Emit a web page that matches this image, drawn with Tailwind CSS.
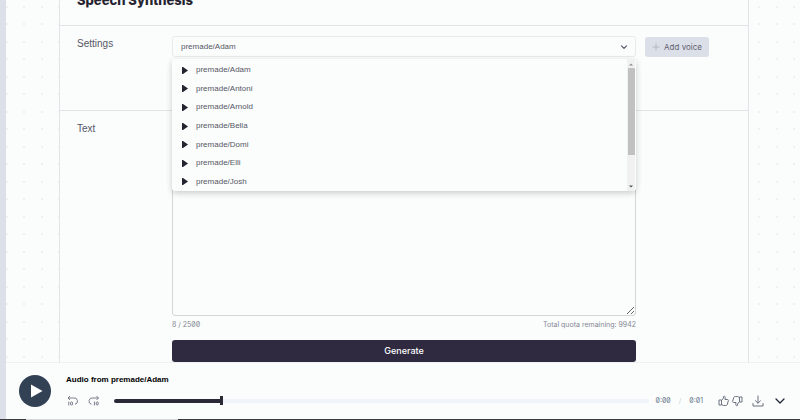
<!DOCTYPE html>
<html lang="en">
<head>
    <meta charset="UTF-8">
    <meta name="viewport" content="width=device-width, initial-scale=1.0">
    <title>Speech Synthesis</title>

    <!-- Tailwind CSS -->
    <script src="https://cdn.jsdelivr.net/npm/@tailwindcss/browser@4"></script>
</head>

<body class="h-screen overflow-hidden flex flex-col bg-[#fbfcfc] text-[#555865] font-['Liberation_Sans',sans-serif]">

    <div class="flex flex-1 min-h-0">
        <div class="w-[6px] shrink-0 bg-[#dbe0e9]"></div>

        <div class="flex flex-col flex-1 min-w-0">

            <!-- Page content on the dotted background -->
            <main class="flex-1 min-h-0 overflow-hidden pl-[53px] pr-[51px] bg-[radial-gradient(circle_at_18px_7px,#eef0f1_1px,transparent_1px),radial-gradient(circle_at_18px_24px,#eef0f1_1px,transparent_1px),radial-gradient(circle_at_1px_7px,#eef0f1_1px,transparent_1px),radial-gradient(circle_at_1px_24px,#eef0f1_1px,transparent_1px)] bg-[size:35px_35px]">
                <div class="h-full border-x border-[#e2e4e8] bg-[#fbfcfc]">

                    <header class="h-[26px] px-[17px] pb-[15px] flex items-end border-b border-[#e2e4e8]">
                        <h1 class="font-['Inter',sans-serif] text-[13px] leading-5 font-extrabold text-[#25232f]">Speech Synthesis</h1>
                    </header>

                    <!-- Settings -->
                    <section class="h-[85px] pl-[17px] pr-[39px] pt-[10px] flex items-start border-b border-[#e2e4e8]">
                        <label for="voice" class="w-[95px] text-[10px] leading-4">Settings</label>

                        <div class="relative z-10 flex-1">
                            <select id="voice" class="block w-full h-[21px] px-2 appearance-none rounded-[3px] border border-[#e9eaed] bg-[#fbfcfc] text-[8px]">
                                <option selected>premade/Adam</option>
                                <option>premade/Antoni</option>
                                <option>premade/Arnold</option>
                                <option>premade/Bella</option>
                                <option>premade/Domi</option>
                                <option>premade/Elli</option>
                                <option>premade/Josh</option>
                            </select>
                            <svg class="absolute right-2 top-[7px] w-2 h-2 pointer-events-none" viewBox="0 0 8 8" fill="none" stroke="#555865" stroke-width="1.2" stroke-linecap="round" stroke-linejoin="round"><path d="M1.5 2.8 4 5.3l2.5-2.5"/></svg>

                            <!-- Open voice list -->
                            <div class="absolute inset-x-0 top-full mt-[2px] h-[132px] flex rounded-[3px] bg-[#fbfcfc] shadow-[0_2px_6px_rgba(0,0,0,0.2)]">
                                <ul class="flex-1 flex flex-col pt-[2px] pl-[10px] text-[8px] leading-3">
                                    <li class="flex-1 flex items-center gap-2"><svg class="w-[6px] h-[7px]" viewBox="0 0 6 7" fill="#25232f"><path d="M0 0h1l5 3.5-5 3.5H0z"/></svg>premade/Adam</li>
                                    <li class="flex-1 flex items-center gap-2"><svg class="w-[6px] h-[7px]" viewBox="0 0 6 7" fill="#25232f"><path d="M0 0h1l5 3.5-5 3.5H0z"/></svg>premade/Antoni</li>
                                    <li class="flex-1 flex items-center gap-2"><svg class="w-[6px] h-[7px]" viewBox="0 0 6 7" fill="#25232f"><path d="M0 0h1l5 3.5-5 3.5H0z"/></svg>premade/Arnold</li>
                                    <li class="flex-1 flex items-center gap-2"><svg class="w-[6px] h-[7px]" viewBox="0 0 6 7" fill="#25232f"><path d="M0 0h1l5 3.5-5 3.5H0z"/></svg>premade/Bella</li>
                                    <li class="flex-1 flex items-center gap-2"><svg class="w-[6px] h-[7px]" viewBox="0 0 6 7" fill="#25232f"><path d="M0 0h1l5 3.5-5 3.5H0z"/></svg>premade/Domi</li>
                                    <li class="flex-1 flex items-center gap-2"><svg class="w-[6px] h-[7px]" viewBox="0 0 6 7" fill="#25232f"><path d="M0 0h1l5 3.5-5 3.5H0z"/></svg>premade/Elli</li>
                                    <li class="flex-1 flex items-center gap-2"><svg class="w-[6px] h-[7px]" viewBox="0 0 6 7" fill="#25232f"><path d="M0 0h1l5 3.5-5 3.5H0z"/></svg>premade/Josh</li>
                                </ul>
                                <div class="w-2 mr-[1px] flex flex-col items-center bg-[#f1f1f1]">
                                    <svg class="w-2 h-[9px]" viewBox="0 0 8 9" fill="#8c8c8c"><path d="M2 6.5 4 4.5l2 2z"/></svg>
                                    <div class="w-[7px] h-[87px] bg-[#c1c1c1]"></div>
                                    <svg class="w-2 h-2 mt-auto" viewBox="0 0 8 8" fill="#505050"><path d="M2 2.5 4 4.5l2-2z"/></svg>
                                </div>
                            </div>
                        </div>

                        <button class="ml-[9px] w-16 h-5 mt-[1px] flex items-center justify-center gap-1 rounded-[3px] bg-[#dbdfe8] font-['Inter',sans-serif] text-[8px] text-[#62616f]">
                            <svg class="w-2 h-2" viewBox="0 0 8 8" fill="none" stroke="#b4b8c1" stroke-width="1"><path d="M4 .5v7M.5 4h7"/></svg>
                            Add voice
                        </button>
                    </section>

                    <!-- Text -->
                    <section class="pl-[17px] pr-[112px] pt-[10px] flex items-start">
                        <label for="text" class="w-[95px] text-[10px] leading-4">Text</label>
                        <div class="flex-1">
                            <textarea id="text" class="block w-full h-[195px] resize rounded-[3px] border border-[#d3d5d9] bg-[#fbfcfc]"></textarea>
                            <div class="flex justify-between mt-[3px] font-['Inter',sans-serif] text-[7px] leading-3 text-[#858893] slashed-zero">
                                <span>8 / 2500</span>
                                <span>Total quota remaining: 9942</span>
                            </div>
                            <button class="block w-full h-[22px] mt-[9px] rounded-[3px] bg-[#2f2a40] font-['Inter',sans-serif] text-[9px] font-medium text-white">Generate</button>
                        </div>
                    </section>
                </div>
            </main>

            <!-- Audio player -->
            <footer class="h-[57px] shrink-0 pl-[13px] pr-[14px] flex items-center border-t border-[#eef0f1] bg-[#fbfcfc]">
                <button aria-label="Play" class="w-8 h-8 shrink-0 rounded-full bg-[#334155] flex items-center justify-center">
                    <svg class="w-8 h-8" viewBox="0 0 32 32" fill="#fff"><path d="M12 9.5 23.5 16 12 22.5z"/></svg>
                </button>
                <div class="flex-1 ml-[15px]">
                    <p class="text-[8px] leading-3 font-bold text-black">Audio from premade/Adam</p>
                    <div class="flex items-center mt-[7px] h-4">
                        <button aria-label="Back 10 seconds">
                            <svg class="w-3 h-3" viewBox="0 0 12 12" fill="none" stroke="#6b7280" stroke-width=".9"><path d="M4 1 2 3l2 2M2 3h5.5a3.2 3.2 0 0 1 1.5 6.3M2.8 6.6v3.8"/><rect x="4.6" y="7" width="2" height="3" rx=".8"/></svg>
                        </button>
                        <button aria-label="Forward 10 seconds" class="ml-[10px]">
                            <svg class="w-3 h-3" viewBox="0 0 12 12" fill="none" stroke="#6b7280" stroke-width=".9"><path d="M8.5 1l2 2-2 2M10.5 3H5a3.2 3.2 0 0 0-1.5 6.3M6.4 6.6v3.8"/><rect x="8.2" y="7" width="2" height="3" rx=".8"/></svg>
                        </button>
                        <input type="range" aria-label="Position" min="0" max="100" value="20" class="ml-[14px] flex-1 min-w-0 h-1 appearance-none rounded-full [&::-webkit-slider-thumb]:appearance-none [&::-webkit-slider-thumb]:w-[3px] [&::-webkit-slider-thumb]:h-[9px] [&::-webkit-slider-thumb]:bg-[#2b2838]" style="background: linear-gradient(to right, #2b2838 20%, #f1f4f9 20%)">
                        <div class="ml-[7px] flex gap-2 font-['Inter',sans-serif] text-[7px] leading-3 slashed-zero text-[#64748b]">
                            <span>0:00</span>
                            <span class="text-[#cbd5e1]">/</span>
                            <span>0:01</span>
                        </div>
                        <button aria-label="Like" class="ml-[15px]">
                            <svg class="w-3 h-3" viewBox="0 0 24 24" fill="none" stroke="#6b7280" stroke-width="2" stroke-linejoin="round"><path d="M7 10v10H2V10zM7 11l4-5V3.5c0-1.500 3.500-1.500 3.500 1.500L14 9h5c2 0 2 2 1.500 3l-2 7c-.5 1.500-1.500 2-3 2H11l-4-2"/></svg>
                        </button>
                        <button aria-label="Dislike" class="ml-[1px]">
                            <svg class="w-3 h-3" viewBox="0 0 24 24" fill="none" stroke="#6b7280" stroke-width="2" stroke-linejoin="round"><path d="M17 14V4h5v10zM17 13l-4 5v2.500c0 1.500-3.500 1.500-3.500-1.500L10 15H5c-2 0-2-2-1.500-3l2-7C6 3.500 7 3 8.500 3H13l4 2"/></svg>
                        </button>
                        <button aria-label="Download" class="ml-[9px]">
                            <svg class="w-3 h-3" viewBox="0 0 12 12" fill="none" stroke="#6b7280" stroke-width="1" stroke-linecap="round" stroke-linejoin="round"><path d="M6 1v7M3.5 5.7 6 8.2l2.5-2.5M1 8.5v2.5h10V8.5"/></svg>
                        </button>
                        <button aria-label="Hide player" class="ml-[10px]">
                            <svg class="w-3 h-3" viewBox="0 0 12 12" fill="none" stroke="#1f2937" stroke-width="1.3" stroke-linecap="round" stroke-linejoin="round"><path d="M2 4l4 4 4-4"/></svg>
                        </button>
                    </div>
                </div>
            </footer>
        </div>
    </div>

    <div class="h-px shrink-0 flex bg-[#3c3c3e]">
        <div class="ml-[26px] w-[152px] bg-[#d6d6d8]"></div>
    </div>

</body>
</html>
